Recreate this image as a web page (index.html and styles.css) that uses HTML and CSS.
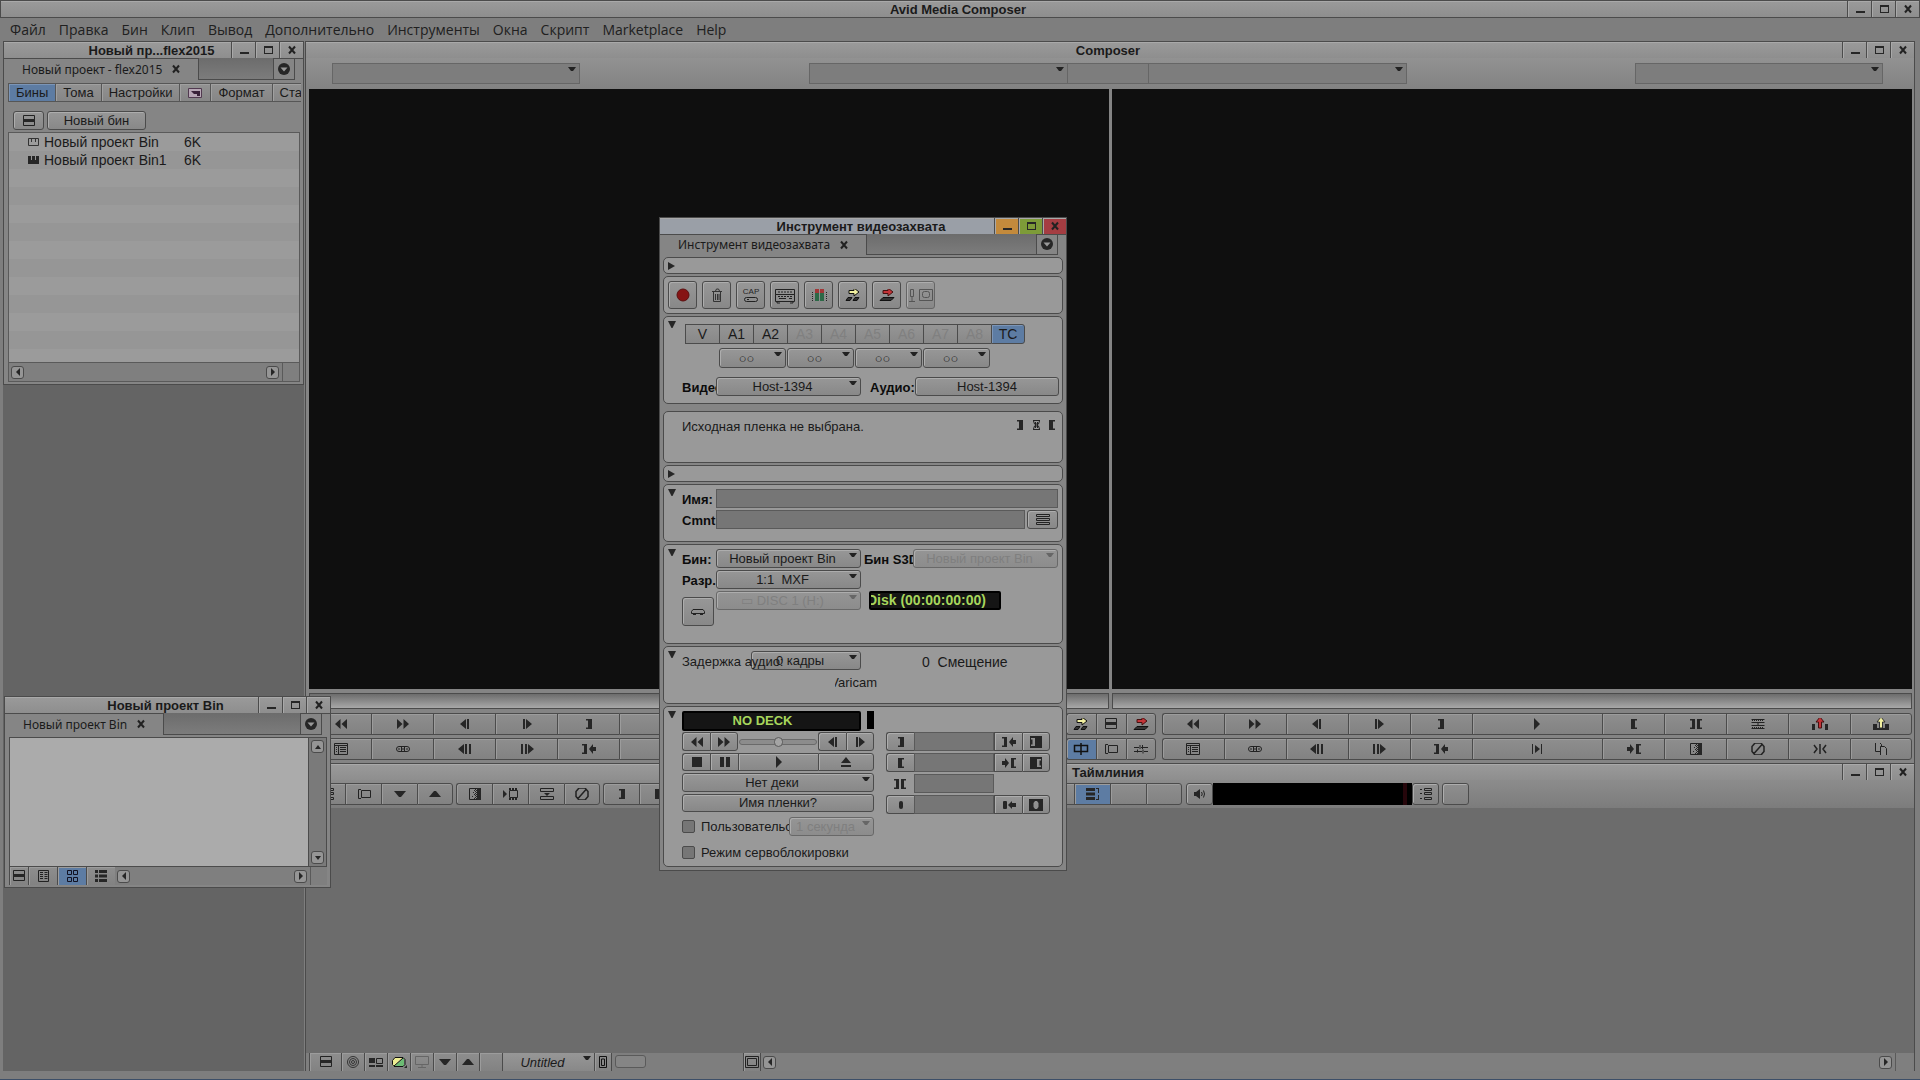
FILE: index.html
```
<!DOCTYPE html>
<html lang="ru">
  <head>
    <meta charset="utf-8">
    <title>Avid Media Composer</title>
    <link rel="stylesheet" href="styles.css">
  </head>
  <body>
    <svg class="sprite" aria-hidden="true">
      <symbol id="min" viewBox="0 0 16 12"><path d="M4 8h9v2H4z"/></symbol>
      <symbol id="max" viewBox="0 0 16 12"><path fill-rule="evenodd" d="M4 2h9v8H4zM5 4v5h7V4z"/></symbol>
      <symbol id="close" viewBox="0 0 16 12"><path fill="none" stroke="#222" stroke-width="2" d="M5 2.500l6 7M11 2.500l-6 7"/></symbol>
      <symbol id="rew" viewBox="0 0 16 12"><path d="M7.500 1v10L2 6zM14 1v10L8.500 6z"/></symbol>
      <symbol id="ff" viewBox="0 0 16 12"><path d="M2 1v10l5.500-5zM8.500 1v10L14 6z"/></symbol>
      <symbol id="back" viewBox="0 0 16 12"><path d="M9 1v10L3 6zM10 1h2v10h-2z"/></symbol>
      <symbol id="fwd" viewBox="0 0 16 12"><path d="M7 1v10l6-5zM4 1h2v10H4z"/></symbol>
      <symbol id="back10" viewBox="0 0 16 12"><path d="M7 1v10L1 6zM8 1h2v10H8zM12 1h2v10h-2z"/></symbol>
      <symbol id="fwd10" viewBox="0 0 16 12"><path d="M9 1v10l6-5zM2 1h2v10H2zM6 1h2v10H6z"/></symbol>
      <symbol id="play" viewBox="0 0 16 12"><path d="M5 0v12l6-6z"/></symbol>
      <symbol id="in" viewBox="0 0 16 12"><path d="M5 1h6v10H5V9.500h2v-7H5z"/></symbol>
      <symbol id="out" viewBox="0 0 16 12"><path d="M11 1H5v10h6V9.500H9v-7h2z"/></symbol>
      <symbol id="inout" viewBox="0 0 16 12"><path d="M2 1h5v10H2V9.500h2v-7H2zM14 1H9v10h5V9.500h-2v-7h2z"/></symbol>
      <symbol id="goin" viewBox="0 0 16 12"><path d="M1 1h5v10H1V9.500h2v-7H1zM8 6l4-5v3h3v4h-3v3z"/></symbol>
      <symbol id="goout" viewBox="0 0 16 12"><path d="M15 1h-5v10h5V9.500h-2v-7h2zM8 6L4 1v3H1v4h3v3z"/></symbol>
      <symbol id="clrin" viewBox="0 0 16 12"><path fill-rule="evenodd" d="M2 0h12v12H2zM3 2v1.500h1.500v5H3V10h4V2z"/></symbol>
      <symbol id="clrout" viewBox="0 0 16 12"><path fill-rule="evenodd" d="M2 0h12v12H2zM13 2v1.500h-1.500v5H13V10H9V2z"/></symbol>
      <symbol id="mark" viewBox="0 0 16 12"><rect x="6" y="2" width="4" height="8" rx="2"/></symbol>
      <symbol id="gomark" viewBox="0 0 16 12"><rect x="2" y="2" width="4" height="8" rx="1"/><path d="M7 6l4-4v2h4v4h-4v2z"/></symbol>
      <symbol id="clrmark" viewBox="0 0 16 12"><path fill-rule="evenodd" d="M1 0h14v12H1zM7 2L5.500 4v4L7 10h2l1.500-2V4L9 2z"/></symbol>
      <symbol id="list" viewBox="0 0 16 12"><path fill="none" stroke="#222" d="M1.500.5h13v11h-13zM1.500 2.500h13M5.500 2v9M7 4.500h6M7 6.500h6M7 8.500h6M3 4.500h1M3 6.500h1M3 8.500h1"/></symbol>
      <symbol id="link" viewBox="0 0 16 12"><rect x="1.500" y="3.500" width="13" height="5" rx="2.500" fill="none" stroke="#222"/><path fill="none" stroke="#222" d="M7 6h2M6.500 4v4M9.500 4v4M4 5v2M12 5v2"/></symbol>
      <symbol id="fade" viewBox="0 0 16 12"><path fill="none" stroke="#222" d="M2.500.5h11v11h-11z"/><path d="M10 0h4v12h-4zM8 1h1v1H8zM7 2h1v1H7zM8 3h1v1H8zM6 4h1v1H6zM8 5h1v1H8zM7 6h1v1H7zM8 7h1v1H8zM5 8h1v1H5zM8 9h1v1H8zM7 10h1v1H7zM9 2h1v1H9zM9 4h1v1H9zM9 6h1v1H9zM9 8h1v1H9zM9 10h1v1H9z"/></symbol>
      <symbol id="slash" viewBox="0 0 16 12"><path fill="none" stroke="#222" stroke-width="1.500" d="M5 0h6l3 3.500v5L11 12H5L2 8.500v-5zM4 10.500L12 1.500"/></symbol>
      <symbol id="film" viewBox="0 0 16 12"><path d="M0 2v8l4-4z"/><path fill="none" stroke="#222" d="M6.500 2.500h8v7h-8z"/><path fill="none" stroke="#222" stroke-width="2" stroke-dasharray="2 1" d="M6 1h9M6 11h9"/></symbol>
      <symbol id="split" viewBox="0 0 16 12"><path fill="none" stroke="#222" d="M1.500.5h13v3h-13zM1.500 8.500h13v3h-13z"/><path d="M5 5h6L8 8z"/></symbol>
      <symbol id="strips" viewBox="0 0 16 12"><path fill="none" stroke="#222" stroke-dasharray="1 1" d="M2 2.500h12M2 9.500h12"/><path fill="none" stroke="#222" d="M1.500 4.500h13M1.500 1.500h13M1.500 7.500h13M1.500 10.500h13M8 5v2"/></symbol>
      <symbol id="swap" viewBox="0 0 16 12"><path fill="none" stroke="#222" stroke-width="1.500" d="M2 2l3 4-3 4M14 2l-3 4 3 4M8 1v10"/></symbol>
      <symbol id="copy" viewBox="0 0 16 12"><path fill="#8c8c8c" stroke="#222" d="M2.500-.5h4l2 2v7h-6z"/><path fill="#8c8c8c" stroke="#222" d="M7.500 3.500h4l2 2v7h-6z"/></symbol>
      <symbol id="playin" viewBox="0 0 16 12"><path d="M3 1h1v10H3zM12 1h1v10h-1zM6 2v8l5-4z"/></symbol>
      <symbol id="bars" viewBox="0 0 16 12"><path fill="none" stroke="#222" d="M2.500.5h11v10h-11z"/><path d="M2 4h12v3H2z"/></symbol>
      <symbol id="panel" viewBox="0 0 16 12"><path fill="none" stroke="#222" d="M5.500 2.500h9v7h-9zM5 1.500H2.500v9H5"/></symbol>
      <symbol id="trim" viewBox="0 0 16 12"><path fill="none" stroke="#111" stroke-width="1.500" d="M1.500 2.500h13v6h-13zM8 0v12"/></symbol>
      <symbol id="sliders" viewBox="0 0 16 12"><path fill="none" stroke="#222" d="M1 4.500h5M8 4.500h7M1 8.500h8M11 8.500h4M7 2v4M9.500 2v4M10 6.500v4M4.500 6.500v3"/></symbol>
      <symbol id="down" viewBox="0 0 16 12"><path d="M2 3h12l-5 6H7z"/></symbol>
      <symbol id="up" viewBox="0 0 16 12"><path d="M2 9h12L9 3H7z"/></symbol>
      <symbol id="stop" viewBox="0 0 16 12"><path d="M3 1h10v10H3z"/></symbol>
      <symbol id="pause" viewBox="0 0 16 12"><path d="M3 1h4v10H3zM9 1h4v10H9z"/></symbol>
      <symbol id="eject" viewBox="0 0 16 12"><path d="M8 1l5 6H3zM3 9h10v2H3z"/></symbol>
      <symbol id="splice" viewBox="0 0 16 12"><path fill="#f2f0a0" stroke="#111" d="M4 1.500h5V-1l5 4-5 4V4.500H4z"/><path fill="#333" stroke="#111" d="M3 8.500h4l-2 3H1zM10 8.500h4l-2 3H8z"/></symbol>
      <symbol id="over" viewBox="0 0 16 12"><path fill="#c33438" stroke="#411" d="M4 1.500h5V-1l5 4-5 4V4.500H4z"/><path fill="#333" stroke="#111" d="M4 8.500h11l-3 3H1z"/></symbol>
      <symbol id="lift" viewBox="0 0 16 12"><path fill="#c33438" stroke="#411" d="M8-1l4 5H9.500v6h-3V4H4z"/><path d="M0 6h3v6H0zM13 6h3v6h-3z"/></symbol>
      <symbol id="extract" viewBox="0 0 16 12"><path d="M0 6h4v6H0zM12 6h4v6h-4zM3 10h10v2H3z"/><path fill="#f2f0a0" stroke="#333" d="M8-1l4 5H9.500v6h-3V4H4z"/></symbol>
      <symbol id="tracks" viewBox="0 0 16 12"><path d="M1 0h9v3H1zM1 4.500h9v3H1zM1 9h9v3H1zM11 0h3v5h-1V1h-2zM11 12h3V7h-1v4h-2z"/></symbol>
      <symbol id="speaker" viewBox="0 0 16 12"><path d="M2 4h2l4-3v10L4 8H2z"/><path fill="none" stroke="#222" d="M9.500 4q1.500 2 0 4M11.500 2.500q2 3.500 0 7"/></symbol>
      <symbol id="tree" viewBox="0 0 16 12"><path fill="none" stroke="#222" d="M6.500.5h7v2h-7zM6.500 4.500h7v2h-7zM6.500 9.500h7v2h-7zM2 1.500h2M2 5.500h2M2 10.500h2"/></symbol>
      <symbol id="page" viewBox="0 0 16 12"><path fill="none" stroke="#222" d="M3.500.5h10v11h-10zM5 2.500h3M9.500 2.500h3M5 4.500h3M9.500 4.500h3M5 6.500h3M9.500 6.500h3M5 8.500h3M9.500 8.500h3"/></symbol>
      <symbol id="frames" viewBox="0 0 16 12"><path fill="none" stroke="#112" d="M3.500.5h4v4h-4zM9.500.5h4v4h-4zM3.500 7.500h4v4h-4zM9.500 7.500h4v4h-4z"/></symbol>
      <symbol id="script" viewBox="0 0 16 12"><path d="M2 0h3v3H2zM2 4.500h3v3H2zM2 9h3v3H2zM6 0h8v3H6zM6 4.500h8v3H6zM6 9h8v3H6z"/></symbol>
      <symbol id="menu" viewBox="0 0 16 12"><circle cx="8" cy="6" r="6"/><path fill="#999" d="M4.500 4.500h7L8 8.500z"/></symbol>
      <symbol id="tri-l" viewBox="0 0 16 12"><path d="M10 2v8L6 6z"/></symbol>
      <symbol id="tri-r" viewBox="0 0 16 12"><path d="M6 2v8l4-4z"/></symbol>
      <symbol id="tri-u" viewBox="0 0 16 12"><path d="M5 8h6L8 4z"/></symbol>
      <symbol id="tri-d" viewBox="0 0 16 12"><path d="M5 4h6L8 8z"/></symbol>
      <symbol id="closed" viewBox="0 0 16 12"><path d="M4 2v8l7-4z"/></symbol>
      <symbol id="opened" viewBox="0 0 16 12"><path d="M4 2h8L8.500 9h-1z"/></symbol>
      <symbol id="bin" viewBox="0 0 16 12"><path fill="none" stroke="#333" d="M3.500 2.500h10v7h-10zM6.500 3v3M10.500 3v3"/></symbol>
      <symbol id="binopen" viewBox="0 0 16 12"><path fill-rule="evenodd" d="M3 2h11v8H3zM6 2v4h1V2zM10 2v4h1V2z"/></symbol>
      <symbol id="fx" viewBox="0 0 16 12"><path fill="#b7a6b5" stroke="#513a50" d="M1.500 1.500h13v9h-13z"/><path fill="#3a2239" d="M4 4h9v5h-3V7H7z"/></symbol>
      <symbol id="target" viewBox="0 0 16 12"><g fill="none" stroke="#333"><circle cx="8" cy="6" r="5.500"/><circle cx="8" cy="6" r="3.500"/><circle cx="8" cy="6" r="1.500"/></g></symbol>
      <symbol id="dual" viewBox="0 0 16 12"><path d="M1 2h6v5H1zM1 9h6v2H1zM8 9h7v2H8z"/><path fill="none" stroke="#222" d="M8.500 2.500h6v5h-6z"/></symbol>
      <symbol id="quality" viewBox="0 0 16 12"><path fill="#6cbb74" d="M3 10.500h10V1.500z"/><path fill="#eeee92" d="M12 1.500H4L1.500 4v6L3 10.500z"/><path fill="none" stroke="#111" d="M4 1.500h8l2 2v5l-2 2H3l-1.500-2v-4zM3 10L12 2"/><path d="M13 12h3V9z"/></symbol>
      <symbol id="monitor" viewBox="0 0 16 12"><path fill="none" stroke="#666" d="M1.500.5h13v8h-13zM8 9v2M4 11.500h8"/></symbol>
      <symbol id="focus" viewBox="0 0 16 12"><path fill="none" stroke="#111" d="M4.500.5h7v11h-7zM6.500 3h3v6.500h-3z"/></symbol>
      <symbol id="fit" viewBox="0 0 16 12"><path fill="none" stroke="#222" d="M1.500.5h13v11h-13zM3.500 2.500h9v7h-9z"/></symbol>
      <symbol id="drive" viewBox="0 0 16 12"><path fill="none" stroke="#222" d="M3 3.500h10l1.500 2v2h-13v-2zM3 8.500h3M10 8.500h3"/></symbol>
      <symbol id="lines" viewBox="0 0 16 12"><path fill="none" stroke="#222" d="M1.500.5h13v2h-13zM1.500 4.500h13v2h-13zM1.500 8.500h13v2h-13z"/></symbol>
      <symbol id="reel" viewBox="0 0 16 12"><path fill="none" stroke="#222" d="M5 1.500h7M5 10.500h7M5.500 2l1 3h4l1-3M5.500 10l1-3h4l1 3M7.500 3v6M9.500 3v6"/></symbol>
      <symbol id="rec" viewBox="0 0 22 18"><circle cx="11" cy="9" r="6" fill="#861414" stroke="#5b1010"/></symbol>
      <symbol id="trash" viewBox="0 0 22 18"><path fill="none" stroke="#333" d="M6 5.500h10M7.500 6v9.500h7V6M9.500 5l1-2h2l1 2M9.500 8v6M11.500 8v6M13 8v6"/></symbol>
      <symbol id="cap" viewBox="0 0 22 18"><text x="11" y="8" text-anchor="middle" font-size="8">CAP</text><rect x="4.500" y="11.500" width="13" height="4" rx="2" fill="none" stroke="#222"/><path stroke="#222" d="M7 13.500h2"/></symbol>
      <symbol id="deck" viewBox="0 0 22 18"><path fill="none" stroke="#222" d="M1.500 3.500h19v5h-19zM1.500 8.500h19v7h-19zM5 12.500h7M15 12.500h3M3 16v1h3M16 17h3v-1"/><path stroke="#222" stroke-dasharray="2 1" d="M4 6h14M4 10.500h14"/></symbol>
      <symbol id="levels" viewBox="0 0 22 18"><path fill="#2d6947" d="M7 6h4v9H7zM12 6h4v9h-4z"/><path fill="#a13737" d="M7 3h4v4H7zM12 3h4v4h-4z"/><path stroke="#222" stroke-dasharray="1 1" d="M4.500 6v10M18.500 6v10"/></symbol>
      <symbol id="mic" viewBox="0 0 28 18"><path fill="none" stroke="#555" d="M3.500 3.500h3v7h-3zM5 11v4M2 15.500h6M12.500 3.500h13v11h-13z"/><rect x="15.500" y="5.500" width="7" height="6" rx="2" fill="none" stroke="#555"/></symbol>
    </svg>

    <div class="app">
      <header class="titlebar">
        <h1 class="title">Avid Media Composer</h1>
        <button class="wbtn"><svg class="ic"><use href="#min"/></svg></button>
        <button class="wbtn"><svg class="ic"><use href="#max"/></svg></button>
        <button class="wbtn"><svg class="ic"><use href="#close"/></svg></button>
      </header>
      <nav class="menubar">
        <a href="#">Файл</a>
        <a href="#">Правка</a>
        <a href="#">Бин</a>
        <a href="#">Клип</a>
        <a href="#">Вывод</a>
        <a href="#">Дополнительно</a>
        <a href="#">Инструменты</a>
        <a href="#">Окна</a>
        <a href="#">Скрипт</a>
        <a href="#">Marketplace</a>
        <a href="#">Help</a>
      </nav>

      <div class="desktop">
        <aside class="side">
          <section class="window project">
            <div class="titlebar">
              <h2 class="title">Новый пр...flex2015</h2>
              <button class="wbtn"><svg class="ic"><use href="#min"/></svg></button>
              <button class="wbtn"><svg class="ic"><use href="#max"/></svg></button>
              <button class="wbtn"><svg class="ic"><use href="#close"/></svg></button>
            </div>
            <div class="tabbar">
              <div class="tab">Новый проект - flex2015 <button class="tabx"><svg class="ic"><use href="#close"/></svg></button></div>
              <div class="tabrest"></div>
              <button class="tabmenu"><svg class="ic"><use href="#menu"/></svg></button>
            </div>
            <div class="modes">
              <button class="on">Бины</button>
              <button>Тома</button>
              <button>Настройки</button>
              <button><svg class="ic"><use href="#fx"/></svg></button>
              <button>Формат</button>
              <button>Статистика</button>
            </div>
            <div class="bintools">
              <button class="btn icon"><svg class="ic"><use href="#bars"/></svg></button>
              <button class="btn new">Новый бин</button>
            </div>
            <table class="binlist">
              <tr><td><svg class="ic"><use href="#bin"/></svg></td><td>Новый проект Bin</td><td>6K</td></tr>
              <tr><td><svg class="ic"><use href="#binopen"/></svg></td><td>Новый проект Bin1</td><td>6K</td></tr>
            </table>
            <div class="hscroll framed">
              <button class="sbtn"><svg class="ic"><use href="#tri-l"/></svg></button>
              <button class="sbtn"><svg class="ic"><use href="#tri-r"/></svg></button>
              <span class="grip"></span>
            </div>
          </section>
        </aside>

        <main class="work">
          <section class="composer">
            <div class="titlebar">
              <h2 class="title">Composer</h2>
              <button class="wbtn"><svg class="ic"><use href="#min"/></svg></button>
              <button class="wbtn"><svg class="ic"><use href="#max"/></svg></button>
              <button class="wbtn"><svg class="ic"><use href="#close"/></svg></button>
            </div>
            <div class="sources">
              <select class="flat" aria-label="Источник"></select>
              <div class="center">
                <select class="flat" aria-label="Клип источника"></select>
                <span class="tc"></span>
                <select class="flat" aria-label="Дорожка"></select>
              </div>
              <select class="flat" aria-label="Секвенция"></select>
            </div>
            <div class="monitors">
              <div class="screen"></div>
              <div class="screen"></div>
            </div>
            <div class="scrubs">
              <div class="scrub"></div>
              <div class="scrub"></div>
            </div>
            <div class="decks">
              <div class="keys">
                <button><svg class="ic"><use href="#rew"/></svg></button>
                <button><svg class="ic"><use href="#ff"/></svg></button>
                <button><svg class="ic"><use href="#back"/></svg></button>
                <button><svg class="ic"><use href="#fwd"/></svg></button>
                <button><svg class="ic"><use href="#in"/></svg></button>
                <button class="wide"><svg class="ic"><use href="#play"/></svg></button>
              </div>
              <div class="keys small">
                <button><svg class="ic"><use href="#splice"/></svg></button>
                <button><svg class="ic"><use href="#bars"/></svg></button>
                <button><svg class="ic"><use href="#over"/></svg></button>
              </div>
              <div class="keys">
                <button><svg class="ic"><use href="#rew"/></svg></button>
                <button><svg class="ic"><use href="#ff"/></svg></button>
                <button><svg class="ic"><use href="#back"/></svg></button>
                <button><svg class="ic"><use href="#fwd"/></svg></button>
                <button><svg class="ic"><use href="#in"/></svg></button>
                <button class="wide"><svg class="ic"><use href="#play"/></svg></button>
                <button><svg class="ic"><use href="#out"/></svg></button>
                <button><svg class="ic"><use href="#inout"/></svg></button>
                <button><svg class="ic"><use href="#strips"/></svg></button>
                <button><svg class="ic"><use href="#lift"/></svg></button>
                <button><svg class="ic"><use href="#extract"/></svg></button>
              </div>
              <div class="keys">
                <button><svg class="ic"><use href="#list"/></svg></button>
                <button><svg class="ic"><use href="#link"/></svg></button>
                <button><svg class="ic"><use href="#back10"/></svg></button>
                <button><svg class="ic"><use href="#fwd10"/></svg></button>
                <button><svg class="ic"><use href="#goin"/></svg></button>
                <button class="wide"><svg class="ic"><use href="#playin"/></svg></button>
              </div>
              <div class="keys small">
                <button class="on"><svg class="ic"><use href="#trim"/></svg></button>
                <button><svg class="ic"><use href="#panel"/></svg></button>
                <button><svg class="ic"><use href="#sliders"/></svg></button>
              </div>
              <div class="keys">
                <button><svg class="ic"><use href="#list"/></svg></button>
                <button><svg class="ic"><use href="#link"/></svg></button>
                <button><svg class="ic"><use href="#back10"/></svg></button>
                <button><svg class="ic"><use href="#fwd10"/></svg></button>
                <button><svg class="ic"><use href="#goin"/></svg></button>
                <button class="wide"><svg class="ic"><use href="#playin"/></svg></button>
                <button><svg class="ic"><use href="#goout"/></svg></button>
                <button><svg class="ic"><use href="#fade"/></svg></button>
                <button><svg class="ic"><use href="#slash"/></svg></button>
                <button><svg class="ic"><use href="#swap"/></svg></button>
                <button><svg class="ic"><use href="#copy"/></svg></button>
              </div>
            </div>
          </section>

          <section class="timeline">
            <div class="titlebar">
              <h2 class="title">Таймлиния</h2>
              <button class="wbtn"><svg class="ic"><use href="#min"/></svg></button>
              <button class="wbtn"><svg class="ic"><use href="#max"/></svg></button>
              <button class="wbtn"><svg class="ic"><use href="#close"/></svg></button>
            </div>
            <div class="tltools">
              <div class="keys">
                <button><svg class="ic"><use href="#tree"/></svg></button>
                <button><svg class="ic"><use href="#panel"/></svg></button>
                <button><svg class="ic"><use href="#down"/></svg></button>
                <button><svg class="ic"><use href="#up"/></svg></button>
              </div>
              <div class="keys">
                <button><svg class="ic"><use href="#fade"/></svg></button>
                <button><svg class="ic"><use href="#film"/></svg></button>
                <button><svg class="ic"><use href="#split"/></svg></button>
                <button><svg class="ic"><use href="#slash"/></svg></button>
              </div>
              <div class="keys">
                <button><svg class="ic"><use href="#in"/></svg></button>
                <button><svg class="ic"><use href="#out"/></svg></button>
                <button></button>
                <button></button>
              </div>
              <div class="keys">
                <button></button><button></button><button></button><button></button>
                <button></button><button></button><button></button><button></button>
                <button></button>
                <button class="on"><svg class="ic"><use href="#tracks"/></svg></button>
                <button></button>
                <button></button>
              </div>
              <div class="meter">
                <button class="btn"><svg class="ic"><use href="#speaker"/></svg></button>
                <div class="level"></div>
                <button class="btn"><svg class="ic"><use href="#tree"/></svg></button>
              </div>
              <button class="btn blank"></button>
            </div>
            <div class="tracks"></div>
            <div class="status">
              <button class="first"><svg class="ic"><use href="#bars"/></svg></button>
              <button><svg class="ic"><use href="#target"/></svg></button>
              <button><svg class="ic"><use href="#dual"/></svg></button>
              <button><svg class="ic"><use href="#quality"/></svg></button>
              <button disabled><svg class="ic"><use href="#monitor"/></svg></button>
              <button><svg class="ic"><use href="#down"/></svg></button>
              <button><svg class="ic"><use href="#up"/></svg></button>
              <button></button>
              <select class="view" aria-label="Вид"><option>Untitled</option></select>
              <button class="slim"><svg class="ic"><use href="#focus"/></svg></button>
              <div class="zoom"><span class="thumb"></span></div>
              <button class="slim"><svg class="ic"><use href="#fit"/></svg></button>
              <div class="hscroll">
                <button class="sbtn"><svg class="ic"><use href="#tri-l"/></svg></button>
                <button class="sbtn"><svg class="ic"><use href="#tri-r"/></svg></button>
                <span class="grip"></span>
              </div>
            </div>
          </section>
        </main>

        <section class="window binwin">
          <div class="titlebar">
            <h2 class="title">Новый проект Bin</h2>
            <button class="wbtn"><svg class="ic"><use href="#min"/></svg></button>
            <button class="wbtn"><svg class="ic"><use href="#max"/></svg></button>
            <button class="wbtn"><svg class="ic"><use href="#close"/></svg></button>
          </div>
          <div class="tabbar">
            <div class="tab">Новый проект Bin <button class="tabx"><svg class="ic"><use href="#close"/></svg></button></div>
            <div class="tabrest"></div>
            <button class="tabmenu"><svg class="ic"><use href="#menu"/></svg></button>
          </div>
          <div class="binbody">
            <div class="binarea"></div>
            <div class="vscroll">
              <button class="sbtn"><svg class="ic"><use href="#tri-u"/></svg></button>
              <button class="sbtn"><svg class="ic"><use href="#tri-d"/></svg></button>
            </div>
          </div>
          <div class="binfoot">
            <button class="first"><svg class="ic"><use href="#bars"/></svg></button>
            <button><svg class="ic"><use href="#page"/></svg></button>
            <button class="on"><svg class="ic"><use href="#frames"/></svg></button>
            <button><svg class="ic"><use href="#script"/></svg></button>
            <div class="hscroll">
              <button class="sbtn"><svg class="ic"><use href="#tri-l"/></svg></button>
              <button class="sbtn"><svg class="ic"><use href="#tri-r"/></svg></button>
              <span class="grip"></span>
            </div>
          </div>
        </section>

        <section class="window capture">
          <div class="titlebar active">
            <h2 class="title">Инструмент видеозахвата</h2>
            <button class="wbtn orange"><svg class="ic"><use href="#min"/></svg></button>
            <button class="wbtn green"><svg class="ic"><use href="#max"/></svg></button>
            <button class="wbtn red"><svg class="ic"><use href="#close"/></svg></button>
          </div>
          <div class="tabbar">
            <div class="tab">Инструмент видеозахвата <button class="tabx"><svg class="ic"><use href="#close"/></svg></button></div>
            <div class="tabrest"></div>
            <button class="tabmenu"><svg class="ic"><use href="#menu"/></svg></button>
          </div>

          <div class="panel thin"><button class="fold"><svg class="ic"><use href="#closed"/></svg></button></div>

          <div class="panel captools">
            <button class="btn"><svg><use href="#rec"/></svg></button>
            <button class="btn"><svg><use href="#trash"/></svg></button>
            <button class="btn"><svg><use href="#cap"/></svg></button>
            <button class="btn"><svg><use href="#deck"/></svg></button>
            <button class="btn"><svg><use href="#levels"/></svg></button>
            <button class="btn"><svg class="ic"><use href="#splice"/></svg></button>
            <button class="btn"><svg class="ic"><use href="#over"/></svg></button>
            <button class="btn mic"><svg><use href="#mic"/></svg></button>
          </div>

          <div class="panel">
            <button class="fold"><svg class="ic"><use href="#opened"/></svg></button>
            <div class="rows io">
              <div class="trackbtns">
                <button>V</button>
                <button>A1</button>
                <button>A2</button>
                <button disabled>A3</button>
                <button disabled>A4</button>
                <button disabled>A5</button>
                <button disabled>A6</button>
                <button disabled>A7</button>
                <button disabled>A8</button>
                <button class="on">TC</button>
              </div>
              <div class="pairs">
                <select class="sel" aria-label="A1 A2"><option>○○</option></select>
                <select class="sel" aria-label="A3 A4"><option>○○</option></select>
                <select class="sel" aria-label="A5 A6"><option>○○</option></select>
                <select class="sel" aria-label="A7 A8"><option>○○</option></select>
              </div>
              <div class="row hosts">
                <label class="lbl" for="video">Видео:</label>
                <select class="sel mid" id="video"><option>Host-1394</option></select>
                <span class="lbl audio">Аудио:</span>
                <button class="btn grow">Host-1394</button>
              </div>
            </div>
          </div>

          <div class="panel tape">
            <p>Исходная пленка не выбрана.</p>
            <svg class="ic"><use href="#in"/></svg>
            <svg class="ic"><use href="#reel"/></svg>
            <svg class="ic"><use href="#out"/></svg>
          </div>

          <div class="panel thin"><button class="fold"><svg class="ic"><use href="#closed"/></svg></button></div>

          <div class="panel names">
            <button class="fold"><svg class="ic"><use href="#opened"/></svg></button>
            <div class="rows">
              <div class="row">
                <label class="lbl" for="name">Имя:</label>
                <input class="field grow" id="name" type="text">
              </div>
              <div class="row">
                <label class="lbl" for="cmnt">Cmnt:</label>
                <input class="field grow" id="cmnt" type="text">
                <button class="btn more"><svg class="ic"><use href="#lines"/></svg></button>
              </div>
            </div>
          </div>

          <div class="panel target">
            <button class="fold"><svg class="ic"><use href="#opened"/></svg></button>
            <div class="rows">
              <div class="row">
                <label class="lbl" for="tbin">Бин:</label>
                <select class="sel mid" id="tbin"><option>Новый проект Bin</option></select>
                <label class="lbl s3d" for="s3d">Бин S3D:</label>
                <select class="sel grow" id="s3d" disabled><option>Новый проект Bin</option></select>
              </div>
              <div class="row">
                <label class="lbl" for="res">Разр.:</label>
                <select class="sel mid" id="res"><option>1:1&nbsp; MXF</option></select>
              </div>
              <div class="row disk">
                <button class="btn drive"><svg class="ic"><use href="#drive"/></svg></button>
                <select class="sel mid" aria-label="Диск" disabled><option>▭ DISC 1 (H:)</option></select>
                <output class="lcd disktime"><span>Disk (00:00:00:00)</span></output>
              </div>
            </div>
          </div>

          <div class="panel delay">
            <button class="fold"><svg class="ic"><use href="#opened"/></svg></button>
            <div class="rows">
              <div class="row">
                <label class="wait" for="delay">Задержка аудио:</label>
                <select class="sel" id="delay"><option>0 кадры</option></select>
                <span class="offset">0&nbsp; Смещение</span>
              </div>
              <div class="row vari"><span>Varicam</span></div>
            </div>
          </div>

          <div class="panel deckpanel">
            <button class="fold"><svg class="ic"><use href="#opened"/></svg></button>
            <div class="deckcols">
              <div class="rows deckleft">
                <div class="lcdrow">
                  <output class="lcd">NO DECK</output>
                  <span class="lamp"></span>
                </div>
                <div class="row shuttle">
                  <div class="pair">
                    <button><svg class="ic"><use href="#rew"/></svg></button>
                    <button><svg class="ic"><use href="#ff"/></svg></button>
                  </div>
                  <input type="range" aria-label="Шаттл">
                  <div class="pair">
                    <button><svg class="ic"><use href="#back"/></svg></button>
                    <button><svg class="ic"><use href="#fwd"/></svg></button>
                  </div>
                </div>
                <div class="pair transport">
                  <button><svg class="ic"><use href="#stop"/></svg></button>
                  <button><svg class="ic"><use href="#pause"/></svg></button>
                  <button><svg class="ic"><use href="#play"/></svg></button>
                  <button><svg class="ic"><use href="#eject"/></svg></button>
                </div>
                <select class="sel" aria-label="Дека"><option>Нет деки</option></select>
                <button class="btn">Имя пленки?</button>
                <div class="row check">
                  <input type="checkbox" id="user">
                  <label for="user">Пользовательский</label>
                  <select class="sel" aria-label="Преролл" disabled><option>1 секунда</option></select>
                </div>
                <div class="row check servo">
                  <input type="checkbox" id="servo">
                  <label for="servo">Режим сервоблокировки</label>
                </div>
              </div>
              <div class="marks">
                <div class="pair">
                  <button><svg class="ic"><use href="#in"/></svg></button>
                  <input class="field" type="text" aria-label="Вход">
                  <button><svg class="ic"><use href="#goin"/></svg></button>
                  <button><svg class="ic"><use href="#clrin"/></svg></button>
                </div>
                <div class="pair">
                  <button><svg class="ic"><use href="#out"/></svg></button>
                  <input class="field" type="text" aria-label="Выход">
                  <button><svg class="ic"><use href="#goout"/></svg></button>
                  <button><svg class="ic"><use href="#clrout"/></svg></button>
                </div>
                <div class="pair open">
                  <span><svg class="ic"><use href="#inout"/></svg></span>
                  <input class="field" type="text" aria-label="Длительность">
                </div>
                <div class="pair">
                  <button><svg class="ic"><use href="#mark"/></svg></button>
                  <input class="field" type="text" aria-label="Метка">
                  <button><svg class="ic"><use href="#gomark"/></svg></button>
                  <button><svg class="ic"><use href="#clrmark"/></svg></button>
                </div>
              </div>
            </div>
          </div>
        </section>
      </div>
    </div>
  </body>
</html>
```
FILE: styles.css
```
* {
  box-sizing: border-box;
}
body {
  margin: 0;
  background-color: #646464;
  color: #1a1a1a;
  font-family: "Liberation Sans", sans-serif;
  font-size: 13px;
}
.sprite {
  position: absolute;
  width: 0;
  height: 0;
}
svg {
  display: block;
  fill: #262626;
  overflow: visible;
}
.ic {
  width: 16px;
  height: 12px;
  flex: none;
}
button,
select,
input {
  margin: 0;
  padding: 0;
  border: 0;
  background: none;
  border-radius: 0;
  color: inherit;
  font: inherit;
}
button {
  display: flex;
  align-items: center;
  justify-content: center;
}
.app {
  display: flex;
  flex-direction: column;
  min-height: 100vh;
  padding: 1px 1px 2px;
  background-color: #7e7e7e;
  border-bottom: 1px solid #3d4f68;
}

/* title bars */
.titlebar {
  display: flex;
  height: 16px;
  background: linear-gradient(#9a9a9a, #8e8e8e);
  outline: 1px solid #4b4b4b;
  box-shadow: inset 0 1px #a9a9a9;
}
.title {
  flex: 1;
  margin: 0;
  padding-left: 68px;
  font-size: 13px;
  line-height: 17px;
  text-align: center;
  white-space: nowrap;
}
.wbtn {
  width: 24px;
  border-left: 1px solid #4b4b4b;
  box-shadow: inset 1px 1px #a9a9a9;
}
.active {
  background: #9a9fa7;
}
.orange {
  background-color: #c38a3c;
}
.green {
  background-color: #7d9b38;
}
.red {
  background-color: #a43d42;
}

.menubar {
  display: flex;
  gap: 13px;
  height: 24px;
  padding-left: 9px;
  align-items: center;
  font-family: "Open Sans", sans-serif;
  font-size: 14px;
}
.menubar a {
  color: #202020;
  text-decoration: none;
}

.desktop {
  position: relative;
  display: flex;
  flex: 1;
  padding: 0 4px 6px 2px;
}
.side {
  width: 301px;
  margin-right: 1px;
  background-color: #646464;
}
.window {
  display: flex;
  flex-direction: column;
  background-color: #858585;
  border: 1px solid #4b4b4b;
}
.project {
  height: 344px;
  padding-bottom: 2px;
}

/* tabs */
.tabbar {
  display: flex;
  height: 22px;
  padding-right: 8px;
}
.tab {
  display: flex;
  align-items: center;
  gap: 6px;
  padding: 0 14px 0 18px;
  font-family: "Noto Sans", sans-serif;
  font-size: 12px;
  white-space: nowrap;
}
.tabrest {
  flex: 1;
  background: linear-gradient(#6c6c6c, #7c7c7c);
  border: 1px solid #4b4b4b;
  border-top: 0;
}
.tabmenu {
  width: 21px;
  border: 1px solid #4b4b4b;
  border-width: 0 1px 1px 0;
}
.modes {
  display: flex;
  height: 19px;
  margin: 3px 2px 0 4px;
  overflow: hidden;
}
.modes button {
  padding: 0 7px;
  font-size: 13px;
  background: linear-gradient(#929292, #868686);
  border: 1px solid #565656;
  border-right: 0;
  box-shadow: inset 1px 1px #a0a0a0;
}
button.on,
.modes button.on {
  background: #5d7ca3;
  box-shadow: inset 1px 1px #7b95b7;
}

/* raised controls */
.btn,
.sel {
  height: 19px;
  background: linear-gradient(#979797, #888888);
  border: 1px solid #4b4b4b;
  border-radius: 3px;
  box-shadow: inset 1px 1px #adadad;
}
.sel,
.flat,
.view {
  appearance: none;
  text-align: center;
  text-align-last: center;
  padding: 0 16px 0 4px;
  opacity: 1;
  background: url("data:image/svg+xml,%3Csvg xmlns='http://www.w3.org/2000/svg' width='8' height='5'%3E%3Cpath d='M0 0h8L5 4H3z' fill='%23222'/%3E%3C/svg%3E") no-repeat right 3px top 3px, linear-gradient(#979797, #888888);
}
.sel:disabled {
  color: #7f7f7f;
  border-color: #686868;
  background-image: url("data:image/svg+xml,%3Csvg xmlns='http://www.w3.org/2000/svg' width='8' height='5'%3E%3Cpath d='M0 0h8L5 4H3z' fill='%23666'/%3E%3C/svg%3E"), linear-gradient(#959595, #8c8c8c);
}
.bintools {
  display: flex;
  gap: 3px;
  padding: 9px 0 2px 9px;
}
.bintools .icon {
  width: 31px;
}
.bintools .new {
  width: 99px;
}
.binlist {
  display: block;
  flex: 1;
  margin: 0 3px 0 4px;
  border: 1px solid #5a5a5a;
  border-spacing: 0;
  font-size: 14px;
  background: repeating-linear-gradient(#9b9b9b 0 18px, #969696 18px 36px);
}
.binlist td {
  height: 18px;
  padding: 0;
  line-height: 18px;
}
.binlist td:first-child {
  padding: 0 3px 0 16px;
}
.binlist td:nth-child(2) {
  width: 140px;
}

/* scroll bars */
.hscroll {
  display: flex;
  flex: 1;
  align-items: center;
  justify-content: space-between;
  padding-left: 2px;
  background-color: #7f7f7f;
}
.framed {
  flex: none;
  height: 19px;
  margin: 0 3px 0 4px;
  border: 1px solid #5a5a5a;
  border-top: 0;
}
.sbtn {
  width: 13px;
  height: 13px;
  background-color: #959595;
  border: 1px solid #4b4b4b;
  border-radius: 3px;
}
.hscroll .sbtn:nth-child(2) {
  margin-left: auto;
  margin-right: 3px;
}
.grip {
  align-self: stretch;
  width: 17px;
  border-left: 1px solid #5a5a5a;
}
.vscroll {
  display: flex;
  flex-direction: column;
  justify-content: space-between;
  align-items: center;
  width: 18px;
  padding: 2px 0;
  background-color: #7a7a7a;
  border-left: 1px solid #4b4b4b;
}

/* composer */
.work {
  display: flex;
  flex: 1;
  flex-direction: column;
  border-left: 1px solid #4b4b4b;
  border-right: 1px solid #4b4b4b;
}
.composer {
  display: flex;
  flex-direction: column;
  padding-top: 1px;
  background-color: #848484;
}
.sources {
  display: flex;
  justify-content: space-between;
  height: 31px;
  padding: 5px 31px 5px 26px;
  background: linear-gradient(#929292, #828282);
}
.flat {
  width: 248px;
  height: 21px;
  border: 1px solid #666;
  background-color: #7d7d7d;
  background-image: url("data:image/svg+xml,%3Csvg xmlns='http://www.w3.org/2000/svg' width='8' height='5'%3E%3Cpath d='M0 0h8L5 4H3z' fill='%23222'/%3E%3C/svg%3E");
}
.center {
  display: flex;
  background-color: #7d7d7d;
}
.center .flat {
  width: 259px;
}
.tc {
  width: 80px;
  border: 1px solid #666;
  border-width: 1px 0;
}
.monitors,
.scrubs {
  display: flex;
  gap: 3px;
  padding: 0 2px 0 3px;
}
.screen {
  flex: 1;
  height: 600px;
  background-color: #0f0f0f;
}
.scrubs {
  padding-top: 4px;
}
.scrub {
  flex: 1;
  height: 16px;
  border: 1px solid #4b4b4b;
  background: linear-gradient(#6c6c6c, #a8a8a8);
}
.decks {
  display: grid;
  grid-template-columns: 1fr 90px 1fr;
  gap: 3px 6px;
  padding: 4px 2px 3px 3px;
}
.keys {
  display: flex;
}
.keys button {
  width: 62px;
  height: 22px;
  background: linear-gradient(#8e8e8e, #828282);
  border: 1px solid #4b4b4b;
  border-right: 0;
  box-shadow: inset 1px 1px #9c9c9c;
}
.keys button:first-child {
  border-radius: 3px 0 0 3px;
}
.keys button:last-child {
  border-right: 1px solid #4b4b4b;
  border-radius: 0 3px 3px 0;
}
.keys .wide {
  flex: 1;
}
.small button {
  width: 30px;
}
.keys button.on {
  background: #5d7ca3;
}

/* timeline */
.timeline {
  display: flex;
  flex: 1;
  flex-direction: column;
  padding-top: 1px;
}
.tltools {
  display: flex;
  gap: 3px;
  padding: 3px;
  background: linear-gradient(#8c8c8c, #7c7c7c);
}
.tltools .keys button {
  width: 36px;
}
.meter {
  display: flex;
  margin-left: 1px;
}
.meter .btn,
.tltools .blank {
  width: 27px;
  height: 22px;
  background: linear-gradient(#8e8e8e, #828282);
}
.level {
  width: 199px;
  background: linear-gradient(90deg, transparent 190px, #26060b 190px 194px, transparent 194px) #000;
}
.tracks {
  flex: 1;
  background-color: #6c6c6c;
}
.status,
.binfoot {
  display: flex;
  height: 18px;
}
.status {
  padding: 0 2px 0 3px;
}
.status > button,
.binfoot > button {
  width: 23px;
  background: linear-gradient(#8e8e8e, #828282);
  border-left: 1px solid #4b4b4b;
  box-shadow: inset 1px 1px #9c9c9c;
}
.status > .first {
  width: 32px;
}
.status > .slim {
  width: 18px;
  border-right: 1px solid #4b4b4b;
}
.view {
  width: 92px;
  border-left: 1px solid #4b4b4b;
  font-style: italic;
}
.zoom {
  width: 131px;
  padding: 2px 3px;
}
.thumb {
  display: block;
  width: 31px;
  height: 13px;
  border: 1px solid #5a5a5a;
  border-radius: 3px;
  background-color: #858585;
}

/* bin window */
.binwin {
  position: absolute;
  left: 3px;
  top: 655px;
  width: 327px;
  height: 192px;
}
.binbody {
  display: flex;
  flex: 1;
  margin: 2px 3px 0 4px;
  border: 1px solid #4b4b4b;
}
.binarea {
  flex: 1;
  background-color: #ababab;
}
.binfoot {
  margin: 0 3px 2px 4px;
  border-left: 1px solid #4b4b4b;
}
.binfoot > button {
  width: 29px;
}
.binfoot > .first {
  width: 18px;
  border-left: 0;
}
.binfoot > button.on {
  background: #5d7ca3;
}

/* capture tool */
.capture {
  position: absolute;
  left: 658px;
  top: 176px;
  width: 408px;
  gap: 2px;
  padding-bottom: 3px;
}
.capture .tabbar {
  height: 21px;
  margin-top: -2px;
}
.panel {
  display: flex;
  margin: 0 3px;
  border: 1px solid #4b4b4b;
  border-radius: 5px;
  background-color: #999;
}
.thin {
  height: 17px;
}
.fold {
  align-self: flex-start;
  width: 10px;
  margin: 2px 5px 0 3px;
}
.captools {
  gap: 5px;
  padding: 4px;
}
.captools .btn {
  width: 29px;
  height: 28px;
}
.captools svg:not(.ic) {
  width: 22px;
  height: 18px;
}
.captools .mic svg {
  width: 28px;
  flex: none;
}
.captools .mic {
  border-color: #666;
}
.rows {
  display: flex;
  flex: 1;
  flex-direction: column;
  gap: 2px;
  padding: 4px 4px 4px 0;
}
.row {
  display: flex;
  height: 19px;
}
.io {
  padding: 7px 3px 7px 0;
}
.trackbtns {
  display: flex;
  padding-left: 3px;
}
.trackbtns button {
  width: 34px;
  height: 20px;
  background: linear-gradient(#959595, #888888);
  border: 1px solid #4b4b4b;
  border-right: 0;
  font-size: 14px;
}
.trackbtns button:disabled {
  color: #808080;
}
.trackbtns button.on {
  background: #5d7ca3;
  border-right: 1px solid #4b4b4b;
  border-radius: 0 3px 3px 0;
}
.pairs {
  display: flex;
  gap: 1px;
  padding: 2px 0 7px 37px;
}
.pairs .sel {
  width: 67px;
  height: 20px;
}
.lbl {
  width: 34px;
  overflow: hidden;
  color: #0c0c0c;
  font-weight: bold;
  line-height: 22px;
  white-space: nowrap;
}
.mid {
  width: 145px;
}
.grow {
  flex: 1;
  min-width: 0;
}
.hosts .audio {
  width: 54px;
  padding-left: 9px;
  overflow: visible;
}
.tape {
  height: 52px;
  margin-top: 5px;
  padding: 7px 2px 0 18px;
}
.tape p {
  flex: 1;
  margin: 0;
}
.names {
  height: 58px;
}
.field {
  background-color: #767676;
  border: 1px solid #5a5a5a;
}
.more {
  width: 31px;
  margin-left: 2px;
}
.target {
  height: 100px;
}
.s3d {
  width: 52px;
  padding-left: 3px;
}
.drive {
  width: 32px;
  height: 29px;
  margin: 6px 2px 0 0;
}
.lcd {
  display: block;
  overflow: hidden;
  background-color: #151515;
  border: 2px solid #000;
  border-radius: 2px;
  color: #a7d65c;
  font-weight: bold;
  text-align: center;
  white-space: nowrap;
}
.disktime {
  display: flex;
  justify-content: flex-end;
  width: 132px;
  margin-left: 8px;
  padding-right: 13px;
  font-size: 14px;
  line-height: 15px;
}
.delay {
  height: 58px;
}
.wait {
  position: relative;
  width: 69px;
  line-height: 22px;
  white-space: nowrap;
}
.delay .sel {
  width: 110px;
}
.offset {
  padding-left: 61px;
  font-size: 14px;
  line-height: 22px;
}
.vari {
  overflow: hidden;
  width: 42px;
  margin-left: 153px;
  justify-content: flex-end;
  line-height: 22px;
}
.deckcols {
  display: flex;
  flex: 1;
}
.deckpanel {
  height: 161px;
}
.deckleft {
  flex: none;
  width: 192px;
  padding-right: 0;
}
.lcdrow {
  display: flex;
  gap: 6px;
  height: 20px;
  margin-bottom: -1px;
}
.lcdrow .lcd {
  width: 179px;
  padding-right: 18px;
  line-height: 16px;
}
.lamp {
  width: 7px;
  height: 18px;
  background-color: #000;
}
.pair {
  display: flex;
  height: 19px;
}
.pair button {
  width: 28px;
  background: linear-gradient(#979797, #888888);
  border: 1px solid #4b4b4b;
  border-right: 0;
  box-shadow: inset 1px 1px #adadad;
}
.pair button:last-child {
  border-right: 1px solid #4b4b4b;
  border-radius: 0 3px 3px 0;
}
.pair button:first-child {
  border-radius: 3px 0 0 3px;
}
.transport button:nth-child(3) {
  flex: 1;
}
.transport button:last-child {
  width: 56px;
}
.shuttle input {
  appearance: none;
  flex: 1;
  min-width: 0;
  margin: 0 1px;
}
.shuttle input::-webkit-slider-runnable-track {
  height: 6px;
  border: 1px solid #6a6a6a;
  border-radius: 3px;
  background-color: #8c8c8c;
}
.shuttle input::-webkit-slider-thumb {
  appearance: none;
  width: 9px;
  height: 10px;
  margin-top: -3px;
  border: 1px solid #5a5a5a;
  border-radius: 5px;
  background-color: #a4a4a4;
}
.check {
  align-items: center;
  gap: 6px;
  margin-top: 3px;
}
.check input {
  appearance: none;
  flex: none;
  width: 13px;
  height: 13px;
  background-color: #767676;
  border: 1px solid #4b4b4b;
  border-radius: 2px;
}
.check label {
  flex: 1;
  overflow: hidden;
  white-space: nowrap;
}
.check .sel {
  width: 85px;
  margin-left: -6px;
}
.servo {
  margin-top: 6px;
}
.marks {
  display: flex;
  flex-direction: column;
  gap: 2px;
  padding: 25px 0 0 12px;
}
.marks .field {
  width: 80px;
}
.open span {
  display: flex;
  align-items: center;
  justify-content: center;
  width: 28px;
}
```
